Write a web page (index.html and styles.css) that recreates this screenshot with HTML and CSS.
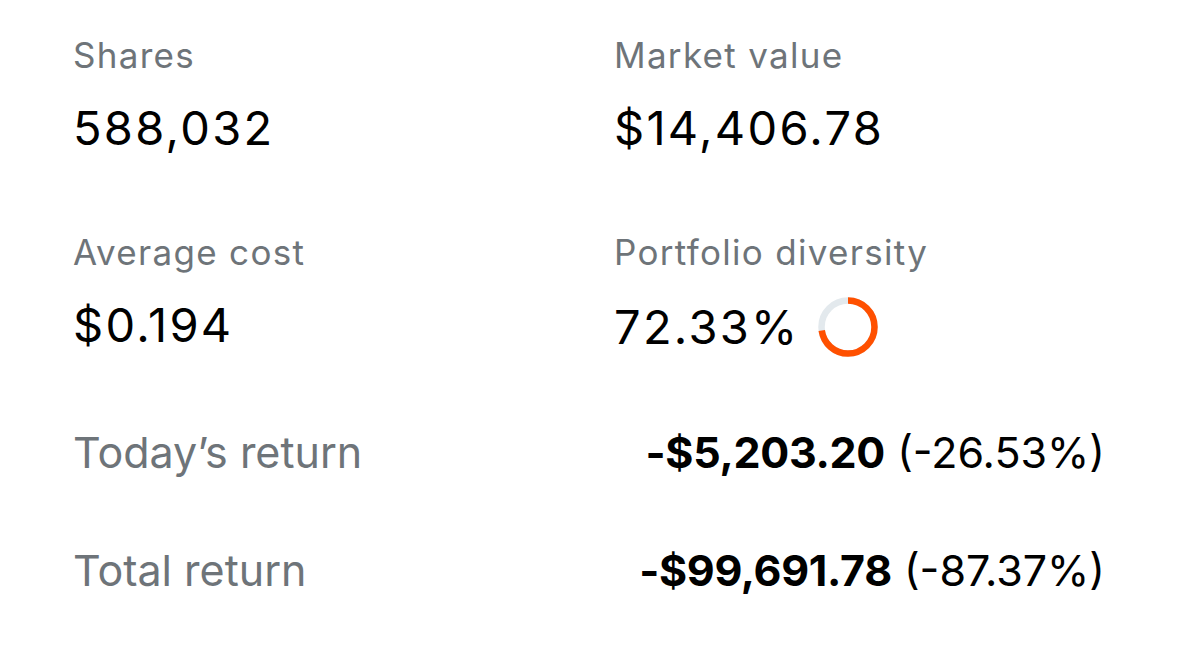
FILE: index.html
```html
<!DOCTYPE html>
<html lang="en">
<head>
    <meta charset="UTF-8">
    <title>Position</title>
    <link rel="stylesheet" href="styles.css">
</head>
<body>
    <div class="position">
        <div class="stats">
            <div class="stat">
                <div class="stat-label">Shares</div>
                <div class="stat-value">588,032</div>
            </div>
            <div class="stat">
                <div class="stat-label">Market value</div>
                <div class="stat-value">$14,406.78</div>
            </div>
            <div class="stat">
                <div class="stat-label">Average cost</div>
                <div class="stat-value">$0.194</div>
            </div>
            <div class="stat">
                <div class="stat-label">Portfolio diversity</div>
                <div class="stat-value diversity">
                    <span>72.33%</span>
                    <svg class="donut" width="60" height="60" viewBox="0 0 60 60">
                        <circle cx="30" cy="30" r="26.5" fill="none" stroke="#e3e9ed" stroke-width="6.5"/>
                        <circle cx="30" cy="30" r="26.5" fill="none" stroke="#ff5000" stroke-width="6.5"
                                stroke-dasharray="120.4 166.5" transform="rotate(-90 30 30)"/>
                    </svg>
                </div>
            </div>
        </div>

        <div class="returns">
            <div class="return-row">
                <span class="return-label">Today’s return</span>
                <span class="return-value"><b>-$5,203.20</b> (-26.53%)</span>
            </div>
            <div class="return-row">
                <span class="return-label">Total return</span>
                <span class="return-value"><b>-$99,691.78</b> (-87.37%)</span>
            </div>
        </div>
    </div>
</body>
</html>
```
FILE: styles.css
```css
body {
    margin : 0;
    background : #ffffff;
    font-family : Inter, "Liberation Sans", sans-serif;
    color : #000000;
}

.position {
    padding : 34px 74px 0 73px;
}

.stats {
    display : grid;
    grid-template-columns : 541px 1fr;
    row-gap : 75px;
}

.stat-label {
    font-size : 35px;
    line-height : 42px;
    letter-spacing : 1.3px;
    color : #6e7479;
}

.stat-value {
    margin-top : 24px;
    font-size : 47px;
    line-height : 56px;
    letter-spacing : 2.3px;
}

.diversity {
    display : flex;
    align-items : center;
    gap : 18px;
}

.donut {
    display : block;
}

.returns {
    margin-top : 69px;
    display : flex;
    flex-direction : column;
    gap : 66px;
}

.return-row {
    display : flex;
    justify-content : space-between;
    align-items : baseline;
    font-size : 43px;
    line-height : 52px;
}

.return-label {
    color : #6e7479;
}

.return-value b {
    font-weight : 700;
    letter-spacing : -0.3px;
}
```
